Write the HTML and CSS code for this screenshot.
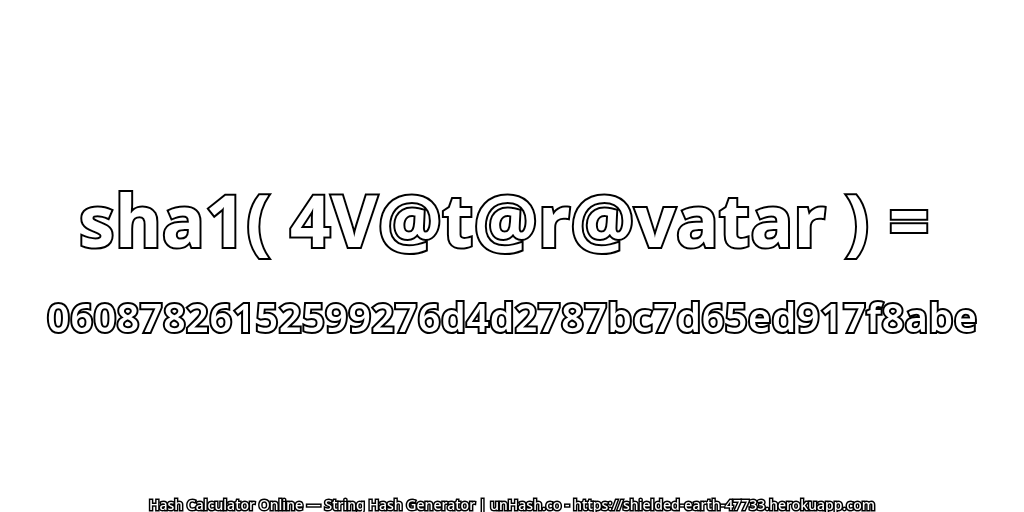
FILE: index.html
```html
<!DOCTYPE html>
<html lang="en">
<head>
  <meta charset="UTF-8">
  <title>unHash</title>
  <link rel="stylesheet" href="styles.css">
</head>
<body>
  <main class="hash">
    <h1 class="linha-a">sha1( 4V@t@r@vatar ) =</h1>
    <h2 class="linha-b">06087826152599276d4d2787bc7d65ed917f8abe</h2>
  </main>
  <footer class="rodape">Hash Calculator Online — String Hash Generator | unHash.co - https://shielded-earth-47733.herokuapp.com</footer>
</body>
</html>
```

FILE: styles.css
```css
* {
  box-sizing: border-box;
}

body {
  margin: 0;
  width: 1024px;
  height: 512px;
  overflow: hidden;
  background: #fff;
  font-family: "Noto Sans", "DejaVu Sans", sans-serif;
  display: flex;
  flex-direction: column;
  align-items: center;
}

.hash {
  flex: 1;
  display: flex;
  flex-direction: column;
  align-items: center;
  padding-top: 176px;
}

.linha-a,
.linha-b,
.rodape {
  margin: 0;
  white-space: nowrap;
  color: #fff;
  paint-order: stroke;
  will-change: opacity;
}

.linha-a {
  font-size: 71px;
  font-weight: 700;
  line-height: 88px;
  letter-spacing: 0.6px;
  padding-right: 15px;
  -webkit-text-stroke: 4px #000;
}

.linha-b {
  font-size: 39px;
  font-weight: 600;
  line-height: 52px;
  letter-spacing: 0.86px;
  padding-left: 1px;
  margin-top: 27px;
  -webkit-text-stroke: 4px #000;
}

.rodape {
  font-size: 14px;
  font-weight: 500;
  line-height: 16px;
  letter-spacing: 0.03px;
  margin-bottom: -1px;
  -webkit-text-stroke: 3px #000;
}
```
